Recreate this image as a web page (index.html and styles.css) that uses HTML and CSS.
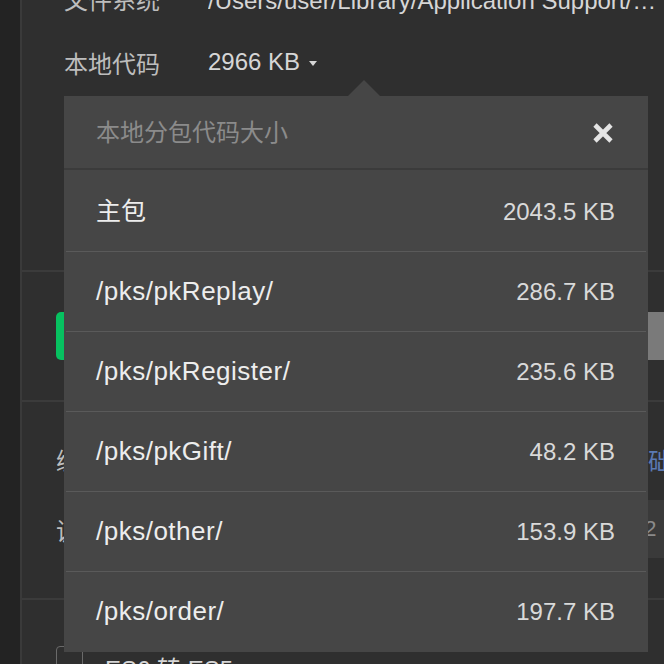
FILE: index.html
```html
<!DOCTYPE html>
<html lang="zh-CN">
<head>
<meta charset="utf-8">
<title>本地代码</title>
<link rel="stylesheet" href="styles.css">
</head>
<body>
<div class="app">
  <aside class="sidebar"></aside>
  <main class="main">
    <section class="sec sec-info">
      <div class="info-row">
        <span class="info-label">文件系统</span>
        <span class="info-value path">/Users/user/Library/Application Support/微信开发者工具</span>
      </div>
      <div class="info-row">
        <span class="info-label">本地代码</span>
        <span class="info-value">2966 KB<span class="caret"></span></span>
      </div>
    </section>
    <section class="sec sec-actions">
      <button class="btn btn-green">上传</button>
      <button class="btn btn-gray">详情</button>
    </section>
    <section class="sec sec-settings">
      <div class="set-row">
        <span class="set-label">编译类型</span>
        <span class="set-link">基础库</span>
      </div>
      <div class="set-row">
        <span class="set-label">调试基础库</span>
        <span class="set-box">3.2</span>
      </div>
    </section>
    <section class="sec sec-options">
      <label class="opt"><span class="checkbox"></span><span class="opt-text">ES6 转 ES5</span></label>
    </section>

    <div class="popover">
      <span class="popover-arrow"></span>
      <div class="pop-head">
        <span class="pop-title">本地分包代码大小</span>
        <svg class="pop-close" width="22" height="22" viewBox="0 0 22 22" aria-hidden="true">
          <path d="M3 3 L19 19 M19 3 L3 19" stroke="#e4e4e4" stroke-width="4.6" stroke-linecap="butt" fill="none"/>
        </svg>
      </div>
      <ul class="pop-list">
        <li class="pop-row"><span class="pkg cjk">主包</span><span class="size">2043.5 KB</span></li>
        <li class="pop-row"><span class="pkg">/pks/pkReplay/</span><span class="size">286.7 KB</span></li>
        <li class="pop-row"><span class="pkg">/pks/pkRegister/</span><span class="size">235.6 KB</span></li>
        <li class="pop-row"><span class="pkg">/pks/pkGift/</span><span class="size">48.2 KB</span></li>
        <li class="pop-row"><span class="pkg">/pks/other/</span><span class="size">153.9 KB</span></li>
        <li class="pop-row"><span class="pkg">/pks/order/</span><span class="size">197.7 KB</span></li>
      </ul>
    </div>
  </main>
</div>
</body>
</html>
```
FILE: styles.css
```css
* { box-sizing: border-box; }
html, body {
  margin: 0;
  padding: 0;
  width: 664px;
  height: 664px;
  overflow: hidden;
  background: #2f2f2f;
  font-family: "Liberation Sans", "Noto Sans CJK SC", sans-serif;
  font-size: 24px;
  color: #d8d8d8;
}
.app {
  display: flex;
  height: 664px;
}
.sidebar {
  width: 20px;
  flex: none;
  background: #232323;
}
.main {
  position: relative;
  flex: 1;
  min-width: 0;
  border-left: 2px solid #3a3a3a;
  background: #2f2f2f;
}
.sec {
  border-bottom: 2px solid #3b3b3b;
}
.sec-info {
  margin-top: -34px;
  padding: 0 0 176px 42px;
}
.info-row {
  display: flex;
  align-items: center;
  height: 64px;
  white-space: nowrap;
}
.info-label {
  width: 144px;
  flex: none;
  color: #bdbdbd;
}
.info-value {
  color: #d6d6d6;
  display: flex;
  align-items: center;
}
.path {
  overflow: hidden;
  text-overflow: ellipsis;
  min-width: 0;
  flex: 1;
  display: block;
}
.caret {
  display: inline-block;
  margin-left: 9px;
  margin-top: 2px;
  width: 0;
  height: 0;
  border-left: 4px solid transparent;
  border-right: 4px solid transparent;
  border-top: 5px solid #d6d6d6;
}
.sec-actions {
  display: flex;
  align-items: center;
  justify-content: space-between;
  height: 130px;
  padding: 0 0 0 34px;
  overflow: hidden;
}
.btn {
  height: 48px;
  border: 0;
  border-radius: 5px;
  font-family: inherit;
  font-size: 20px;
  color: #fff;
}
.btn-green {
  width: 120px;
  background: #07c160;
}
.btn-gray {
  width: 120px;
  margin-right: -96px;
  background: #7a7a7a;
}
.sec-settings {
  height: 198px;
  padding: 22px 0 0 34px;
  overflow: hidden;
}
.set-row {
  display: grid;
  grid-template-columns: 568px auto;
  align-items: center;
  height: 70px;
  white-space: nowrap;
}
.set-label {
  color: #bdbdbd;
}
.set-link {
  color: #5b79b3;
}
.set-box {
  display: block;
  height: 58px;
  line-height: 58px;
  margin-left: -8px;
  padding-left: 10px;
  background: #3a3a3a;
  color: #8a8a8a;
  font-size: 22px;
  width: 120px;
}
.sec-options {
  border-bottom: 0;
  padding: 46px 0 0 34px;
}
.opt {
  display: flex;
  align-items: flex-start;
}
.checkbox {
  width: 27px;
  height: 27px;
  border: 1px solid #6a6a6a;
  border-radius: 4px;
  flex: none;
}
.opt-text {
  margin-left: 22px;
  margin-top: 4px;
  color: #d6d6d6;
}

/* popover */
.popover {
  position: absolute;
  left: 42px;
  top: 96px;
  width: 584px;
  background: #464646;
}
.popover-arrow {
  position: absolute;
  left: 284px;
  top: -16px;
  width: 0;
  height: 0;
  border-left: 16px solid transparent;
  border-right: 16px solid transparent;
  border-bottom: 16px solid #464646;
}
.pop-head {
  display: flex;
  align-items: center;
  justify-content: space-between;
  height: 74px;
  padding: 0 34px 4px 32px;
  border-bottom: 2px solid #3b3b3b;
}
.pop-title {
  color: #8b8b8b;
}
.pop-close {
  display: block;
  margin-top: 6px;
}
.pop-list {
  list-style: none;
  margin: 0;
  padding: 2px 2px 0;
}
.pop-row {
  display: flex;
  align-items: center;
  justify-content: space-between;
  height: 80px;
  padding: 0 31px 0 30px;
  border-bottom: 1px solid #5a5a5a;
}
.pop-row:last-child {
  border-bottom: 0;
}
.pkg {
  color: #ededed;
  font-size: 26px;
  letter-spacing: 0.5px;
  margin-top: -1px;
}
.pkg.cjk {
  font-size: 25px;
  letter-spacing: 0;
  margin-top: -5px;
}
.size {
  color: #d9d9d9;
}
```
